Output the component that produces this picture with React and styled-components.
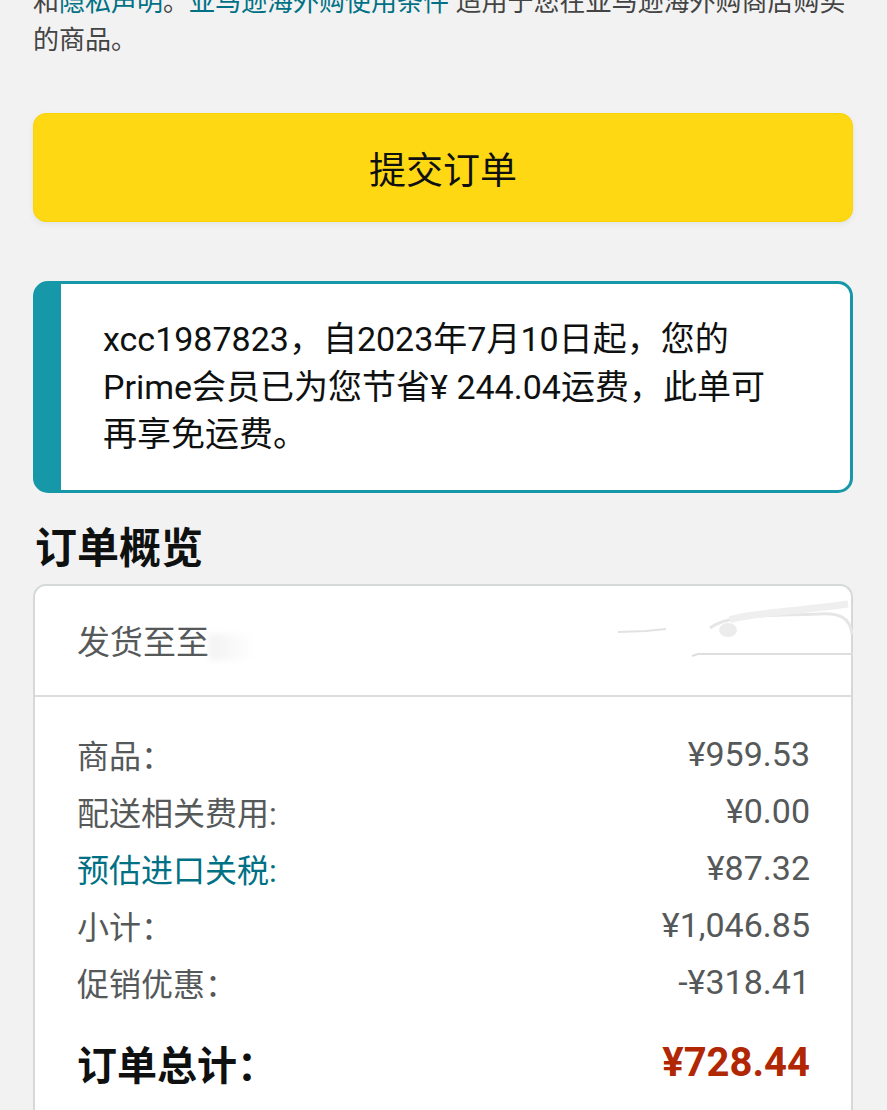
import React from "react";
import styled, { createGlobalStyle } from "styled-components";

const Global = createGlobalStyle`
  html, body { margin: 0; padding: 0; background: #f2f2f2; }
  body { font-family: Roboto, "Noto Sans CJK SC", "Noto Sans", sans-serif; overflow: hidden; }
  * { box-sizing: border-box; }
`;

const Page = styled.div`
  padding: 0 34px 0 33px;
  display: flex;
  flex-direction: column;
`;

const Legal = styled.p`
  margin: -17px 0 0;
  font-size: 26px;
  line-height: 38px;
  color: #444;
`;

const Link = styled.span`
  color: #007185;
`;

const SubmitButton = styled.button`
  margin-top: 54px;
  height: 109px;
  width: 100%;
  border: 1px solid #fcd200;
  border-radius: 13px;
  background: #ffd814;
  box-shadow: 0 2px 5px rgba(213, 217, 217, 0.6);
  font-family: inherit;
  font-size: 37px;
  color: #0f1111;
  cursor: pointer;
`;

const PrimeBox = styled.div`
  margin-top: 59px;
  border: 3px solid #1798a8;
  border-left-width: 28px;
  border-radius: 15px;
  background: #fff;
  padding: 32px 30px 31px 42px;
  font-size: 34px;
  line-height: 47.5px;
  color: #0f1111;
`;

const Line = styled.span`
  display: block;
  white-space: nowrap;
`;

const Heading = styled.h2`
  margin: 30px 0 0 2px;
  font-size: 42px;
  line-height: 52px;
  font-weight: 700;
  color: #0f1111;
`;

const Card = styled.div`
  margin-top: 9px;
  border: 2px solid #d5d9d9;
  border-bottom: none;
  border-radius: 13px 13px 0 0;
  background: #fff;
  padding-bottom: 40px;
`;

const ShipRow = styled.div`
  position: relative;
  height: 111px;
  display: flex;
  align-items: center;
  padding-left: 42px;
  border-bottom: 2px solid #dddddd;
  font-size: 33px;
  color: #565959;
`;

const Smear = styled.span`
  display: inline-block;
  width: 46px;
  height: 26px;
  margin-top: 14px;
  background: linear-gradient(90deg, rgba(230, 230, 230, 0.5), rgba(255, 255, 255, 0));
  filter: blur(3px);
`;

const Redaction = styled.svg`
  position: absolute;
  right: -2px;
  top: 8px;
  width: 235px;
  height: 80px;
`;

const Rows = styled.div`
  padding: 29px 41px 0 42px;
  display: flex;
  flex-direction: column;
`;

const Row = styled.div`
  display: flex;
  justify-content: space-between;
  align-items: center;
  height: ${(p) => (p.$total ? "60px" : "57px")};
  margin-top: ${(p) => (p.$total ? "22px" : "0")};
  font-weight: ${(p) => (p.$total ? 700 : 400)};
`;

const Label = styled.span`
  font-size: ${(p) => (p.$total ? "40px" : "32px")};
  color: ${(p) => (p.$link ? "#007185" : p.$total ? "#0f1111" : "#565959")};
`;

const Value = styled.span`
  font-size: ${(p) => (p.$total ? "40px" : "34px")};
  color: ${(p) => (p.$total ? "#b12704" : "#565959")};
`;

const rows = [
  ["商品：", "¥959.53"],
  ["配送相关费用:", "¥0.00"],
  ["预估进口关税:", "¥87.32", true],
  ["小计：", "¥1,046.85"],
  ["促销优惠：", "-¥318.41"],
];

export default function App() {
  return (
    <>
      <Global />
      <Page>
        <Legal>
          和<Link>隐私声明</Link>。<Link>亚马逊海外购使用条件</Link> 适用于您在亚马逊海外购商店购买的商品。
        </Legal>
        <SubmitButton>提交订单</SubmitButton>
        <PrimeBox>
          <Line>xcc1987823，自2023年7月10日起，您的</Line>
          <Line>Prime会员已为您节省¥ 244.04运费，此单可</Line>
          <Line>再享免运费。</Line>
        </PrimeBox>
        <Heading>订单概览</Heading>
        <Card>
          <ShipRow>
            发货至至<Smear />
            <Redaction viewBox="0 0 235 80">
              <path d="M0 38 L28 37 L48 35" stroke="#e2e2e2" strokeWidth="2" fill="none" />
              <path d="M92 34 C110 20, 150 22, 200 20 C222 18, 232 24, 234 40" stroke="#e6e6e6" strokeWidth="3" fill="none" />
              <path d="M112 26 C124 20, 190 16, 230 10" stroke="#efefef" strokeWidth="7" fill="none" />
              <ellipse cx="110" cy="36" rx="9" ry="7" fill="#ececec" />
              <path d="M74 62 L80 60 L235 60" stroke="#dedede" strokeWidth="2" fill="none" />
            </Redaction>
          </ShipRow>
          <Rows>
            {rows.map(([l, v, link]) => (
              <Row key={l}>
                <Label $link={link}>{l}</Label>
                <Value>{v}</Value>
              </Row>
            ))}
            <Row $total>
              <Label $total>订单总计：</Label>
              <Value $total>¥728.44</Value>
            </Row>
          </Rows>
        </Card>
      </Page>
    </>
  );
}
